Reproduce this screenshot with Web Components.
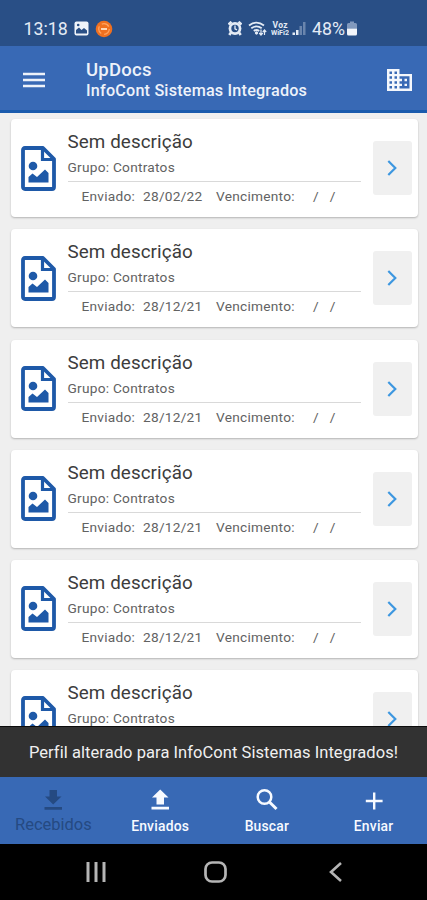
<!DOCTYPE html>
<html lang="pt-BR">
<head>
<meta charset="UTF-8">
<meta name="viewport" content="width=device-width, initial-scale=1.0">
<title>UpDocs</title>
<style>
    html, body {
        margin: 0;
        height: 100%;
        overflow: hidden;
    }

    body {
        font-family: Roboto, "Liberation Sans", sans-serif;
        --color-primary: #3869b5;
        --color-primary-dark: #294f86;
        --color-accent: #1a5bad;
    }
</style>
</head>
<body>
<updocs-app></updocs-app>

<script>
class StatusBar extends HTMLElement {
    constructor() {
        super();
        this.attachShadow({ mode: 'open' });
    }

    connectedCallback() {
        this.shadowRoot.innerHTML = `
            <style>
                :host {
                    display: flex;
                    justify-content: space-between;
                    align-items: center;
                    box-sizing: border-box;
                    height: 46px;
                    padding: 11px 70px 0 23.5px;
                    background: var(--color-primary-dark);
                    color: #e4ebf5;
                    font-size: 17.8px;
                }

                .side {
                    display: flex;
                    align-items: center;
                }

                svg { display: block; }
                .photo { margin-left: 6px; }
                .app { margin-left: 6px; }
                .wifi { margin-left: 6px; }
                .volte { margin-left: 4px; }
                .signal { margin: 0 6px 0 3px; }
                .battery { margin-left: 2px; }
            </style>

            <div class="side">
                <span>${this.getAttribute('time')}</span>
                <svg class="photo" width="15" height="15" viewBox="0 0 15 15">
                    <rect x=".5" y=".5" width="14" height="14" rx="2" fill="#f0f4fa"/>
                    <path d="M2 12.500V9L5 6.500 7.500 9 10 7 13 9.500V12.500Z" fill="#294f86"/>
                    <circle cx="4.200" cy="4" r="1.300" fill="#294f86"/>
                </svg>
                <svg class="app" width="18" height="18" viewBox="0 0 18 18">
                    <circle cx="9" cy="9" r="8.300" fill="#f0701f"/>
                    <circle cx="9" cy="9" r="5.300" fill="none" stroke="#ffa35f" stroke-width="1.300" stroke-dasharray="8 3"/>
                    <path d="M6 9h6" stroke="#ffd9b8" stroke-width="2"/>
                </svg>
            </div>
            <div class="side">
                <svg width="14" height="15" viewBox="0 0 14 15">
                    <path d="M.5 3.500 3.500.8M13.500 3.500 10.500.8M3 11.500 1.300 14M11 11.500l1.700 2.500" stroke="#e4ebf5" stroke-width="2.600"/>
                    <circle cx="7" cy="7.500" r="6.400" fill="#e4ebf5"/>
                    <circle cx="7" cy="7.500" r="3.700" fill="#294f86"/>
                    <path d="M7 4.500v3.400l2 1" fill="none" stroke="#e4ebf5" stroke-width="1.300"/>
                </svg>
                <svg class="wifi" width="19" height="15" viewBox="0 0 19 15" fill="none" stroke="#e4ebf5">
                    <path d="M1 4.500Q8.500-1.300 16 4.500M3.300 7.300Q8.500 3.300 13.700 7.300M5.800 10Q8.500 8 11.200 10" stroke-width="1.800"/>
                    <circle cx="8.500" cy="12" r="1.200" fill="#e4ebf5"/>
                    <path d="M13 8.500v5M11.200 12l1.800 2 1.800-2M16.500 14V9.500M14.800 11l1.700-2 1.700 2" stroke-width="1.200"/>
                </svg>
                <svg class="volte" width="18" height="15" viewBox="0 0 18 15" fill="#e4ebf5" font-family="Roboto, sans-serif" font-weight="700">
                    <text x="1.500" y="7" font-size="8.500" textLength="15">Voz</text>
                    <text x="0" y="14" font-size="7.500" textLength="18" lengthAdjust="spacingAndGlyphs">WiFi2</text>
                </svg>
                <svg class="signal" width="14" height="15" viewBox="0 0 14 15" fill="#e4ebf5">
                    <path d="M.5 11.500h2.500V14H.5zM4 9h2.500v5H4z"/>
                    <path d="M7.500 5H10v9H7.500zM11 1h2.500v13H11z" opacity=".35"/>
                </svg>
                <span>${this.getAttribute('battery')}</span>
                <svg class="battery" width="10" height="15" viewBox="0 0 10 15">
                    <path d="M3 .5h4V2h1.500Q10 2 10 3.500V7.500H0V3.500Q0 2 1.500 2H3Z" fill="#8199bd"/>
                    <path d="M0 7.500h10V13q0 1.500-1.500 1.500h-7Q0 14.500 0 13Z" fill="#f2f5fa"/>
                </svg>
            </div>
        `;
    }
}

class AppHeader extends HTMLElement {
    constructor() {
        super();
        this.attachShadow({ mode: 'open' });
    }

    connectedCallback() {
        this.shadowRoot.innerHTML = `
            <style>
                :host {
                    display: flex;
                    align-items: center;
                    box-sizing: border-box;
                    height: 67px;
                    padding: 0 15px 0 23px;
                    background: var(--color-primary);
                    border-bottom: 3px solid var(--color-accent);
                    color: #edf2fa;
                    font-weight: 500;
                }

                .titles {
                    flex: 1;
                    margin-left: 41px;
                    padding-top: 4px;
                }

                .title {
                    font-size: 18.5px;
                    line-height: 22px;
                    letter-spacing: .25px;
                }

                .subtitle {
                    font-size: 16.2px;
                    line-height: 20px;
                    letter-spacing: .19px;
                }

                .menu { margin-top: 4px; }
            </style>

            <svg class="menu" width="22" height="16" viewBox="0 0 22 16">
                <path d="M0 2h22M0 8h22M0 14h22" stroke="#edf2fa" stroke-width="2.700"/>
            </svg>
            <div class="titles">
                <div class="title"><slot name="title"></slot></div>
                <div class="subtitle"><slot name="subtitle"></slot></div>
            </div>
            <svg class="menu" width="25" height="22" viewBox="2 3 20 18" preserveAspectRatio="none">
                <path fill="#f4f7fc" d="M12 7V3H2v18h20V7H12zM6 19H4v-2h2v2zm0-4H4v-2h2v2zm0-4H4V9h2v2zm0-4H4V5h2v2zm4 12H8v-2h2v2zm0-4H8v-2h2v2zm0-4H8V9h2v2zm0-4H8V5h2v2zm10 12h-8v-2h2v-2h-2v-2h2v-2h-2V9h8v10zm-2-8h-2v2h2v-2zm0 4h-2v2h2v-2z"/>
            </svg>
        `;
    }
}

class DocumentCard extends HTMLElement {
    constructor() {
        super();
        this.attachShadow({ mode: 'open' });
    }

    connectedCallback() {
        this.shadowRoot.innerHTML = `
            <style>
                :host {
                    display: flex;
                    box-sizing: border-box;
                    flex: none;
                    height: 98px;
                    padding: 0 6px 0 10.5px;
                    background: #fff;
                    border-radius: 4px;
                    box-shadow: 0 1px 2px rgba(0, 0, 0, .25);
                }

                .file {
                    flex: none;
                    margin-top: 26.5px;
                }

                .content {
                    flex: 1;
                    margin: 0 12px 0 11.5px;
                    padding-top: 11px;
                    color: #626262;
                    font-size: 13.7px;
                    letter-spacing: .25px;
                }

                .name {
                    color: #3c3c3c;
                    font-size: 18.8px;
                    line-height: 25px;
                    letter-spacing: .1px;
                }

                .group {
                    line-height: 16px;
                    padding: 4px 0 6px;
                    border-bottom: 1px solid #d9d9d9;
                }

                .dates {
                    display: flex;
                    padding: 6px 0 0 14px;
                    line-height: 16px;
                    white-space: pre;
                }

                .sent { width: 61.5px; }
                .sent-date { width: 73px; }
                .due { width: 97px; }

                .open {
                    display: flex;
                    align-items: center;
                    justify-content: center;
                    box-sizing: border-box;
                    width: 39px;
                    height: 54px;
                    margin-top: 22px;
                    padding-right: 1px;
                    background: #f0f0f0;
                    border-radius: 3px;
                }
            </style>

            <svg class="file" width="35" height="45" viewBox="0 0 35 45" fill="none" stroke="#1e59a8">
                <path d="M4 2H22L33 13V41Q33 43 31 43H4Q2 43 2 41V4Q2 2 4 2Z" stroke-width="3.800" stroke-linejoin="round"/>
                <path d="M21.500 3V13.500H32" stroke-width="3.200"/>
                <circle cx="12" cy="20" r="4.300" fill="#1e59a8" stroke="none"/>
                <path d="M7.500 36.500V31L11.500 27.500 16 31 24 23.500 27.500 27V36.500Z" fill="#1e59a8" stroke="none"/>
            </svg>
            <div class="content">
                <div class="name">${this.getAttribute('name')}</div>
                <div class="group">Grupo: ${this.getAttribute('group')}</div>
                ${this.hasAttribute('sent') ? this.renderDates() : ''}
            </div>
            <div class="open">
                <svg width="10" height="16" viewBox="0 0 10 16">
                    <path d="M1.300 1 8.300 8 1.300 15" fill="none" stroke="#3d97e0" stroke-width="2.200"/>
                </svg>
            </div>
        `;
    }

    renderDates() {
        return `
            <div class="dates"><span class="sent">Enviado:</span><span class="sent-date">${this.getAttribute('sent')}</span><span class="due">Vencimento:</span><span>/   /</span></div>
        `;
    }
}

class ToastMessage extends HTMLElement {
    constructor() {
        super();
        this.attachShadow({ mode: 'open' });
    }

    connectedCallback() {
        this.shadowRoot.innerHTML = `
            <style>
                :host {
                    display: flex;
                    align-items: center;
                    justify-content: center;
                    box-sizing: border-box;
                    height: 51px;
                    background: #323232;
                    border-top: 1px solid #0c0c0c;
                    color: #f0f0f0;
                    font-size: 16.5px;
                    letter-spacing: .06px;
                    white-space: nowrap;
                }
            </style>
            <slot></slot>
        `;
    }
}

class TabItem extends HTMLElement {
    constructor() {
        super();
        this.attachShadow({ mode: 'open' });
    }

    connectedCallback() {
        this.shadowRoot.innerHTML = `
            <style>
                :host {
                    display: flex;
                    flex: 1;
                    flex-direction: column;
                    align-items: center;
                    color: #f7faff;
                    font-size: 13.9px;
                    font-weight: 500;
                    letter-spacing: .2px;
                }

                :host([active]) {
                    color: #254a82;
                    font-size: 16.5px;
                    font-weight: 400;
                    letter-spacing: 0;
                }

                svg {
                    width: 26px;
                    height: 24px;
                    margin-top: 11px;
                    fill: currentColor;
                }

                .label {
                    line-height: 18px;
                    margin-top: 5px;
                }

                :host([active]) .label { margin-top: 4px; }
            </style>
            <svg viewBox="0 0 26 24">${TAB_ICONS[this.getAttribute('icon')]}</svg>
            <span class="label"><slot></slot></span>
        `;
    }
}

const TAB_ICONS = {
    download: '<path d="M9.500 2h7.500v6.500h4.500L13.200 16.500 5 8.500h4.500zM4.500 19h17.500v2.800H4.500z"/>',
    upload: '<path d="M9.500 16.500h7.500V9.500h4.500L13.200 1.500 5 9.500h4.500zM4.500 18.800h17.500v2.700H4.500z"/>',
    search: '<circle cx="10.500" cy="9" r="6.800" fill="none" stroke="currentColor" stroke-width="2.500"/><path d="M15.200 13.700 22.500 21" stroke="currentColor" stroke-width="3"/>',
    add: '<path d="M12 4.500h2.400v7.300h7.200v2.400h-7.200v7.300H12v-7.300H4.800v-2.400H12z"/>'
};

class TabBar extends HTMLElement {
    constructor() {
        super();
        this.attachShadow({ mode: 'open' });
    }

    connectedCallback() {
        this.shadowRoot.innerHTML = `
            <style>
                :host {
                    display: flex;
                    height: 67px;
                    background: var(--color-primary);
                }
            </style>
            <slot></slot>
        `;
    }
}

class SystemNav extends HTMLElement {
    constructor() {
        super();
        this.attachShadow({ mode: 'open' });
    }

    connectedCallback() {
        this.shadowRoot.innerHTML = `
            <style>
                :host {
                    display: flex;
                    align-items: center;
                    box-sizing: border-box;
                    height: 56px;
                    padding-left: 86px;
                    background: #000;
                }

                svg {
                    fill: none;
                    stroke: #b5b5b5;
                }

                .home { margin: 0 102px 0 97px; }
            </style>
            <svg width="21" height="20" viewBox="0 0 21 20">
                <path d="M2 0v20M10 0v20M18 0v20" stroke-width="3"/>
            </svg>
            <svg class="home" width="23" height="22" viewBox="0 0 23 22">
                <rect x="1.500" y="1.500" width="20" height="19" rx="6.500" stroke-width="2.700"/>
            </svg>
            <svg width="13" height="20" viewBox="0 0 13 20">
                <path d="M12 1 2 10 12 19" stroke-width="2.600"/>
            </svg>
        `;
    }
}

class UpdocsApp extends HTMLElement {
    constructor() {
        super();
        this.attachShadow({ mode: 'open' });
    }

    connectedCallback() {
        const sentDates = ['28/02/22', '28/12/21', '28/12/21', '28/12/21', '28/12/21', null];

        this.shadowRoot.innerHTML = `
            <style>
                :host {
                    display: flex;
                    flex-direction: column;
                    width: 427px;
                    height: 900px;
                    background: #efefef;
                }

                .list {
                    display: flex;
                    flex: 1;
                    flex-direction: column;
                    gap: 12.1px;
                    min-height: 0;
                    padding: 6.4px 9px 0 10.5px;
                    overflow: hidden;
                    box-sizing: border-box;
                }
            </style>

            <status-bar time="13:18" battery="48%"></status-bar>
            <app-header>
                <span slot="title">UpDocs</span>
                <span slot="subtitle">InfoCont Sistemas Integrados</span>
            </app-header>
            <div class="list">
                ${sentDates.map(sent => `<document-card name="Sem descrição" group="Contratos" ${sent ? `sent="${sent}"` : ''}></document-card>`).join('')}
            </div>
            <toast-message>Perfil alterado para InfoCont Sistemas Integrados!</toast-message>
            <tab-bar>
                <tab-item icon="download" active>Recebidos</tab-item>
                <tab-item icon="upload">Enviados</tab-item>
                <tab-item icon="search">Buscar</tab-item>
                <tab-item icon="add">Enviar</tab-item>
            </tab-bar>
            <system-nav></system-nav>
        `;
    }
}

customElements.define('status-bar', StatusBar);
customElements.define('app-header', AppHeader);
customElements.define('document-card', DocumentCard);
customElements.define('toast-message', ToastMessage);
customElements.define('tab-item', TabItem);
customElements.define('tab-bar', TabBar);
customElements.define('system-nav', SystemNav);
customElements.define('updocs-app', UpdocsApp);
</script>
</body>
</html>
